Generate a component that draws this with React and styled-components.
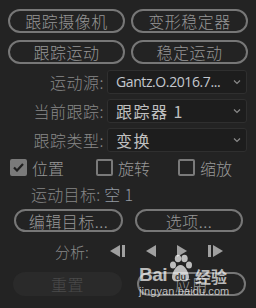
import React, { useState } from 'react';
import styled, { createGlobalStyle } from 'styled-components';

const GlobalStyle = createGlobalStyle`
  html, body {
    margin: 0;
    padding: 0;
    background: #232323;
  }
  body {
    font-family: "Noto Sans CJK SC", "Noto Sans", sans-serif;
    font-weight: 300;
  }
`;

const Panel = styled.div`
  position: relative;
  width: 256px;
  height: 308px;
  box-sizing: border-box;
  padding-top: 9px;
  background: #232323;
  overflow: hidden;
`;

const ButtonGrid = styled.div`
  display: grid;
  grid-template-columns: 117px 117px;
  column-gap: 6px;
  row-gap: 7px;
  padding: 0 8px;
`;

const PillButton = styled.button`
  height: ${p => p.$h || 24}px;
  box-sizing: border-box;
  border: 2px solid ${p => (p.$disabled ? 'transparent' : '#777777')};
  border-radius: 12px;
  background: ${p => (p.$disabled ? '#2a2a2a' : 'transparent')};
  color: ${p => (p.$disabled ? '#4b4b4b' : '#969696')};
  font-family: "Noto Sans CJK SC", sans-serif;
  font-weight: 300;
  font-size: 16px;
  line-height: 1;
  padding: 0;
  display: flex;
  align-items: center;
  justify-content: center;
  letter-spacing: 0.5px;
`;

const Fields = styled.div`
  display: flex;
  flex-direction: column;
  gap: 5px;
  margin-top: 6px;
  padding-right: 9px;
`;

const FieldRow = styled.div`
  display: grid;
  grid-template-columns: 104px 1fr;
  column-gap: 3px;
  align-items: center;
`;

const FieldLabel = styled.span`
  text-align: right;
  color: #888888;
  font-size: 16px;
  line-height: 1;
  letter-spacing: 0.5px;
`;

const Select = styled.div`
  height: 24px;
  box-sizing: border-box;
  border: 1px solid #2f2f2f;
  border-radius: 3px;
  background: #1d1d1d;
  display: flex;
  align-items: center;
  justify-content: space-between;
  padding: 0 4px 0 8px;
`;

const SelectValue = styled.span`
  color: ${p => (p.$latin ? '#c4c8cf' : '#c0c0c0')};
  font-family: ${p => (p.$latin ? '"Open Sans", "Noto Sans", sans-serif' : '"Noto Sans CJK SC", sans-serif')};
  font-weight: 400;
  font-size: ${p => (p.$latin ? 14 : 16)}px;
  letter-spacing: ${p => (p.$latin ? '-0.4px' : '1.5px')};
  line-height: 1;
  white-space: nowrap;
`;

const Chevron = () => (
  <svg width="10" height="8" viewBox="0 0 10 8">
    <path d="M2 2.5 L5 5.5 L8 2.5" fill="none" stroke="#8a8a8a" strokeWidth="1.2" />
  </svg>
);

const CheckRow = styled.div`
  display: grid;
  grid-template-columns: 86px 82px auto;
  padding-left: 10px;
  margin-top: 7px;
`;

const CheckItem = styled.label`
  display: flex;
  align-items: center;
  gap: 5px;
  color: #989898;
  font-size: 16px;
  line-height: 1;
`;

const Box = styled.span`
  width: 17px;
  height: 17px;
  box-sizing: border-box;
  border: 2px solid #7a7a7a;
  border-radius: 2px;
  background: ${p => (p.$on ? '#7a7a7a' : 'transparent')};
  display: flex;
  align-items: center;
  justify-content: center;
`;

const TargetLine = styled.div`
  margin-top: 10px;
  padding-left: 31px;
  font-size: 16px;
  line-height: 16px;
  color: #858585;
  letter-spacing: 0.3px;
`;

const TargetValue = styled.span`
  color: #939aa2;
`;

const EditRow = styled.div`
  display: grid;
  grid-template-columns: 109px 108px;
  column-gap: 12px;
  padding-left: 14px;
  margin-top: 7px;
`;

const AnalyzeRow = styled.div`
  display: flex;
  align-items: center;
  margin-top: 12px;
  padding-left: 55px;
  height: 14px;
`;

const AnalyzeLabel = styled.span`
  color: #888888;
  font-size: 15px;
  line-height: 1;
  width: 55px;
`;

const Transport = styled.div`
  display: flex;
  align-items: center;
  gap: 19px;
`;

const BottomRow = styled.div`
  display: grid;
  grid-template-columns: 109px 109px;
  column-gap: 15px;
  padding-left: 13px;
  margin-top: 14px;
`;

const Watermark = styled.div`
  position: absolute;
  left: 139px;
  top: 254px;
  width: 100px;
  color: rgba(255, 255, 255, 0.7);
  font-family: "Liberation Sans", sans-serif;
  pointer-events: none;
`;

const MarkTop = styled.div`
  display: flex;
  align-items: flex-end;
  height: 30px;
`;

const MarkBai = styled.span`
  font-size: 19px;
  font-weight: bold;
  line-height: 1;
  letter-spacing: -0.5px;
`;

const MarkJing = styled.span`
  font-family: "Noto Sans CJK SC", sans-serif;
  font-size: 16px;
  font-weight: bold;
  line-height: 1;
  margin-left: 1px;
`;

const MarkUrl = styled.div`
  font-size: 11px;
  line-height: 1;
  margin-top: 2px;
  letter-spacing: 0.1px;
`;

const Paw = () => (
  <svg width="27" height="30" viewBox="0 0 27 30">
    <g fill="rgba(255,255,255,0.7)">
      <ellipse cx="6" cy="11" rx="3" ry="3.6" />
      <ellipse cx="11" cy="4.5" rx="3.2" ry="3.8" />
      <ellipse cx="17.5" cy="4.5" rx="3.2" ry="3.8" />
      <ellipse cx="22" cy="11" rx="3" ry="3.6" />
      <path d="M13.5 11 C9 11 5 19 5 23 C5 28 10 28 13.5 26.5 C17 28 22 28 22 23 C22 19 18 11 13.5 11 Z" />
    </g>
    <text x="13.5" y="26" textAnchor="middle" fontSize="9" fontWeight="bold" fontFamily="Liberation Sans" fill="#3a3a3a">du</text>
  </svg>
);

const Icon = ({ kind }) => {
  const c = '#a0a0a0';
  if (kind === 'stepBack')
    return (
      <svg width="16" height="12" viewBox="0 0 16 12">
        <path d="M0 6 L10 0 L10 12 Z" fill={c} />
        <rect x="12" y="0" width="3" height="12" fill={c} />
      </svg>
    );
  if (kind === 'back')
    return (
      <svg width="12" height="12" viewBox="0 0 12 12">
        <path d="M1 6 L11 0 L11 12 Z" fill={c} />
      </svg>
    );
  if (kind === 'play')
    return (
      <svg width="12" height="12" viewBox="0 0 12 12">
        <path d="M1 0 L11 6 L1 12 Z" fill={c} />
      </svg>
    );
  return (
    <svg width="16" height="12" viewBox="0 0 16 12">
      <rect x="1" y="0" width="3" height="12" fill={c} />
      <path d="M6 0 L16 6 L6 12 Z" fill={c} />
    </svg>
  );
};

const Check = () => (
  <svg width="11" height="9" viewBox="0 0 11 9">
    <path d="M1 4.5 L4 7.5 L10 1" fill="none" stroke="#1f1f1f" strokeWidth="2.2" />
  </svg>
);

const fields = [
  { label: '运动源:', value: 'Gantz.O.2016.7...', latin: true },
  { label: '当前跟踪:', value: '跟踪器 1' },
  { label: '跟踪类型:', value: '变换' },
];

export default function App() {
  const [checks, setChecks] = useState({ pos: true, rot: false, scale: false });
  const toggle = k => setChecks(s => ({ ...s, [k]: !s[k] }));

  return (
    <Panel>
      <GlobalStyle />
      <ButtonGrid>
        <PillButton>跟踪摄像机</PillButton>
        <PillButton>变形稳定器</PillButton>
        <PillButton>跟踪运动</PillButton>
        <PillButton>稳定运动</PillButton>
      </ButtonGrid>

      <Fields>
        {fields.map(f => (
          <FieldRow key={f.label}>
            <FieldLabel>{f.label}</FieldLabel>
            <Select>
              <SelectValue $latin={f.latin}>{f.value}</SelectValue>
              <Chevron />
            </Select>
          </FieldRow>
        ))}
      </Fields>

      <CheckRow>
        <CheckItem onClick={() => toggle('pos')}>
          <Box $on={checks.pos}>{checks.pos && <Check />}</Box>位置
        </CheckItem>
        <CheckItem onClick={() => toggle('rot')}>
          <Box $on={checks.rot}>{checks.rot && <Check />}</Box>旋转
        </CheckItem>
        <CheckItem onClick={() => toggle('scale')}>
          <Box $on={checks.scale}>{checks.scale && <Check />}</Box>缩放
        </CheckItem>
      </CheckRow>

      <TargetLine>
        运动目标: <TargetValue>空 1</TargetValue>
      </TargetLine>

      <EditRow>
        <PillButton $h={23}>编辑目标...</PillButton>
        <PillButton $h={23}>选项...</PillButton>
      </EditRow>

      <AnalyzeRow>
        <AnalyzeLabel>分析:</AnalyzeLabel>
        <Transport>
          <Icon kind="stepBack" />
          <Icon kind="back" />
          <Icon kind="play" />
          <Icon kind="stepFwd" />
        </Transport>
      </AnalyzeRow>

      <BottomRow>
        <PillButton $disabled>重置</PillButton>
        <PillButton>应用</PillButton>
      </BottomRow>

      <Watermark>
        <MarkTop>
          <MarkBai>Bai</MarkBai>
          <Paw />
          <MarkJing>经验</MarkJing>
        </MarkTop>
        <MarkUrl>jingyan.baidu.com</MarkUrl>
      </Watermark>
    </Panel>
  );
}
